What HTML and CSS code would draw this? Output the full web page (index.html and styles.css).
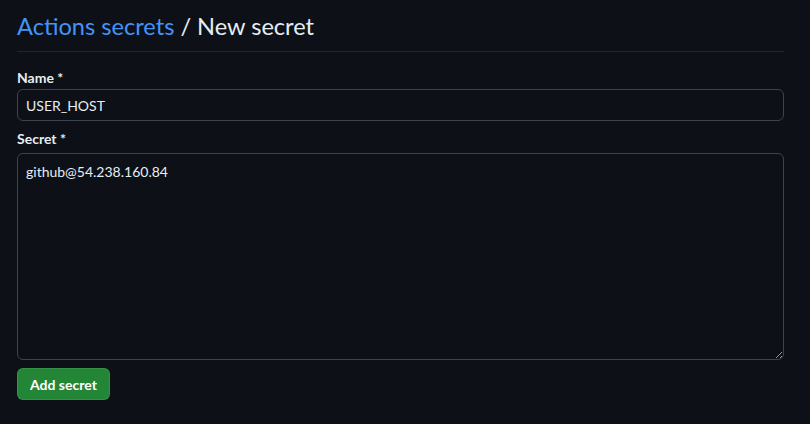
FILE: index.html
```html
<!DOCTYPE html>
<html>
<head>
<meta charset="utf-8">
<link rel="stylesheet" href="styles.css">
</head>
<body>
<div class="page">
  <div class="subhead">
    <h2 class="title"><a class="crumb" href="#">Actions secrets</a> / New secret</h2>
  </div>
  <form class="form">
    <div class="group">
      <label class="label">Name *</label>
      <input class="input" type="text" value="USER_HOST">
    </div>
    <div class="group">
      <label class="label label-secret">Secret *</label>
      <textarea class="textarea">github@54.238.160.84</textarea>
    </div>
    <button class="btn" type="button">Add secret</button>
  </form>
</div>
</body>
</html>
```
FILE: styles.css
```css
html, body {
  margin: 0;
  padding: 0;
  background: #0d1117;
  color: #e6edf3;
  font-family: Lato, "Noto Sans", "Liberation Sans", sans-serif;
}
.page {
  width: 767px;
  padding: 10px 0 0 17px;
}
.subhead {
  border-bottom: 1px solid #21262d;
  padding-bottom: 9px;
}
.title {
  margin: 0;
  font-size: 23.6px;
  font-weight: 400;
  line-height: 32px;
}
.crumb {
  color: #4493f8;
  text-decoration: none;
}
.form {
  padding-top: 16px;
}
.group {
  margin-bottom: 8px;
}
.label {
  display: block;
  font-size: 14px;
  font-weight: 700;
  line-height: 20px;
  margin-bottom: 1px;
}
.label-secret {
  margin-bottom: 4px;
}
.input, .textarea {
  box-sizing: border-box;
  width: 100%;
  display: block;
  background: #0d1117;
  color: #e6edf3;
  border: 1px solid #3d444d;
  border-radius: 6px;
  font-family: inherit;
  font-size: 14px;
  padding: 5px 8px;
  line-height: 20px;
  outline: none;
}
.input {
  height: 32px;
}
.textarea {
  height: 207px;
  padding-top: 8px;
  resize: vertical;
}
.btn {
  margin-top: 0;
  height: 32px;
  padding: 0 12px;
  background: #238636;
  color: #fff;
  border: 1px solid rgba(240,246,252,0.1);
  border-radius: 6px;
  font-family: inherit;
  font-size: 14px;
  font-weight: 700;
}
```
